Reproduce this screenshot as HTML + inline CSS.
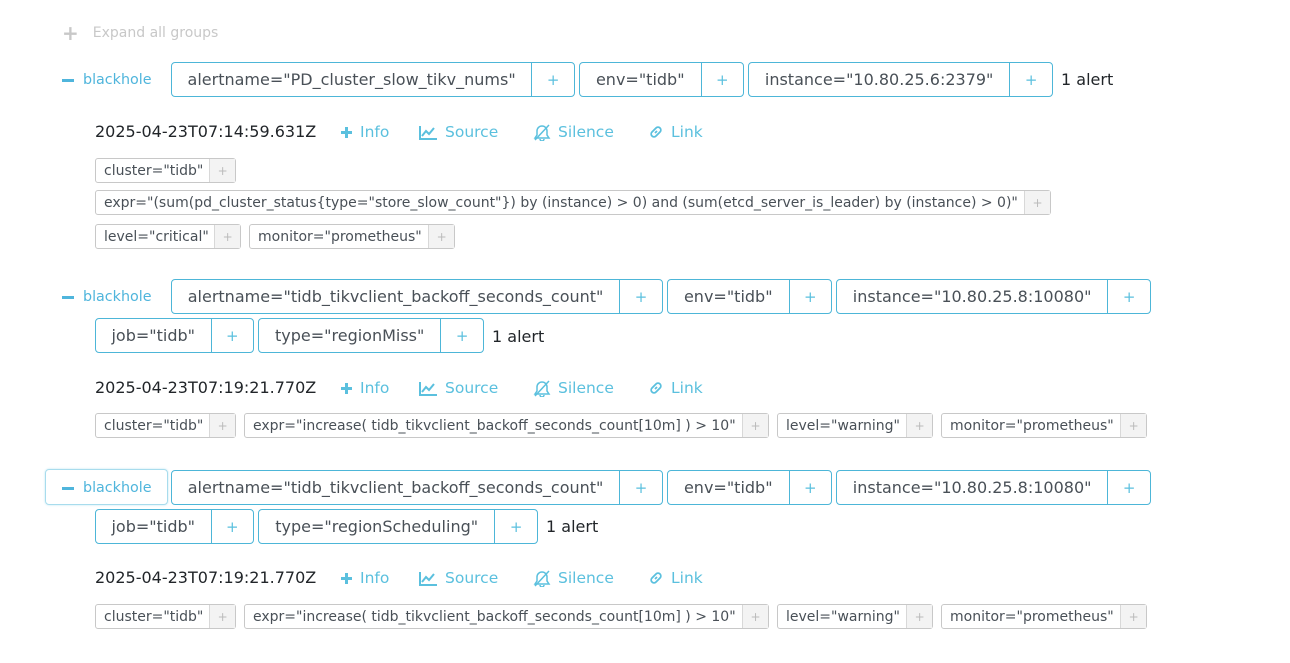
<!DOCTYPE html>
<html><head><meta charset="utf-8"><style>
*{box-sizing:border-box;margin:0;padding:0}
body{width:1290px;height:663px;background:#fff;font-family:"DejaVu Sans","Liberation Sans",sans-serif;position:relative;overflow:hidden;color:#212529}
.a{position:absolute}
.b{position:absolute;display:flex;border:1px solid #4db6d8;border-radius:4px;height:35px;font-size:16px;color:#495057}
.b span{display:flex;align-items:center;justify-content:center;height:100%}
.b .p{width:43px;border-left:1px solid #4db6d8;color:#5bc0de;font-size:15px}
.l{position:absolute;display:flex;border:1px solid #c8c8c8;border-radius:3px;height:25px;font-size:14px;color:#495057}
.l span{display:flex;align-items:center;height:100%;padding-left:8px;white-space:nowrap}
.l .p{width:26px;border-left:1px solid #d8d8d8;background:#f3f3f3;color:#bbb;font-size:12px;padding-left:0;justify-content:center}
.g{position:absolute;color:#4fb5dc;font-size:14.3px;display:flex;align-items:center}
.g i{display:inline-block;width:12px;height:3px;background:#4fb5dc;margin-right:9px}
.cnt{position:absolute;font-size:16px;color:#212529}
.ts{position:absolute;font-size:16px;color:#212529}
.lk{position:absolute;font-size:15.5px;color:#5bc0de;display:flex;align-items:center}
.lk svg{margin-right:7px}
</style></head><body>
<div class="a" style="left:62px;top:21px;font-size:14px;color:#c8c8c8;display:flex;align-items:center"><span style="font-weight:bold;font-size:20px;margin-right:14px">+</span>Expand all groups</div>

<!-- group 1 -->
<div class="g" style="left:62px;top:72px"><i></i>blackhole</div>
<div class="b" style="left:171px;top:62px;width:404px"><span style="width:361px">alertname="PD_cluster_slow_tikv_nums"</span><span class="p">+</span></div>
<div class="b" style="left:579px;top:62px;width:165px"><span style="width:122px">env="tidb"</span><span class="p">+</span></div>
<div class="b" style="left:748px;top:62px;width:305px"><span style="width:262px">instance="10.80.25.6:2379"</span><span class="p">+</span></div>
<div class="cnt" style="left:1061px;top:70px">1 alert</div>

<div class="ts" style="left:95px;top:122px">2025-04-23T07:14:59.631Z</div>
<div class="lk" style="left:340px;top:123px"><svg width="13" height="13"><path d="M6.5 1v11M1 6.5h11" stroke="#5bc0de" stroke-width="3"/></svg>Info</div>
<div class="lk" style="left:419px;top:123px"><svg width="19" height="15"><path d="M1 1v13h17M3 11l4-5 3 3 5-6" stroke="#5bc0de" stroke-width="2" fill="none"/></svg>Source</div>
<div class="lk" style="left:533px;top:123px"><svg width="18" height="17"><path d="M9 2a5 5 0 0 0-5 5v4l-2 3h14l-2-3V7a5 5 0 0 0-5-5M7 15a2 2 0 0 0 4 0M2 16L16 1" stroke="#5bc0de" stroke-width="1.5" fill="none"/></svg>Silence</div>
<div class="lk" style="left:648px;top:123px"><svg width="16" height="16"><path d="M7 9l2-2M6 6L4 8a2.5 2.5 0 0 0 4 4l2-2M10 10l2-2a2.5 2.5 0 0 0-4-4L6 6" stroke="#5bc0de" stroke-width="1.8" fill="none"/></svg>Link</div>

<div class="l" style="left:95px;top:158px;width:141px"><span style="width:115px">cluster="tidb"</span><span class="p">+</span></div>
<div class="l" style="left:95px;top:190px;width:956px"><span style="width:930px">expr="(sum(pd_cluster_status{type="store_slow_count"}) by (instance) &gt; 0) and (sum(etcd_server_is_leader) by (instance) &gt; 0)"</span><span class="p">+</span></div>
<div class="l" style="left:95px;top:224px;width:146px"><span style="width:120px">level="critical"</span><span class="p">+</span></div>
<div class="l" style="left:249px;top:224px;width:206px"><span style="width:180px">monitor="prometheus"</span><span class="p">+</span></div>

<!-- group 2 -->
<div class="g" style="left:62px;top:289px"><i></i>blackhole</div>
<div class="b" style="left:171px;top:279px;width:492px"><span style="width:449px">alertname="tidb_tikvclient_backoff_seconds_count"</span><span class="p">+</span></div>
<div class="b" style="left:667px;top:279px;width:165px"><span style="width:122px">env="tidb"</span><span class="p">+</span></div>
<div class="b" style="left:836px;top:279px;width:315px"><span style="width:272px">instance="10.80.25.8:10080"</span><span class="p">+</span></div>
<div class="b" style="left:95px;top:318px;width:159px"><span style="width:116px">job="tidb"</span><span class="p">+</span></div>
<div class="b" style="left:258px;top:318px;width:226px"><span style="width:183px">type="regionMiss"</span><span class="p">+</span></div>
<div class="cnt" style="left:492px;top:327px">1 alert</div>

<div class="ts" style="left:95px;top:378px">2025-04-23T07:19:21.770Z</div>
<div class="lk" style="left:340px;top:379px"><svg width="13" height="13"><path d="M6.5 1v11M1 6.5h11" stroke="#5bc0de" stroke-width="3"/></svg>Info</div>
<div class="lk" style="left:419px;top:379px"><svg width="19" height="15"><path d="M1 1v13h17M3 11l4-5 3 3 5-6" stroke="#5bc0de" stroke-width="2" fill="none"/></svg>Source</div>
<div class="lk" style="left:533px;top:379px"><svg width="18" height="17"><path d="M9 2a5 5 0 0 0-5 5v4l-2 3h14l-2-3V7a5 5 0 0 0-5-5M7 15a2 2 0 0 0 4 0M2 16L16 1" stroke="#5bc0de" stroke-width="1.5" fill="none"/></svg>Silence</div>
<div class="lk" style="left:648px;top:379px"><svg width="16" height="16"><path d="M7 9l2-2M6 6L4 8a2.5 2.5 0 0 0 4 4l2-2M10 10l2-2a2.5 2.5 0 0 0-4-4L6 6" stroke="#5bc0de" stroke-width="1.8" fill="none"/></svg>Link</div>

<div class="l" style="left:95px;top:413px;width:141px"><span style="width:115px">cluster="tidb"</span><span class="p">+</span></div>
<div class="l" style="left:244px;top:413px;width:525px"><span style="width:499px">expr="increase( tidb_tikvclient_backoff_seconds_count[10m] ) &gt; 10"</span><span class="p">+</span></div>
<div class="l" style="left:777px;top:413px;width:156px"><span style="width:130px">level="warning"</span><span class="p">+</span></div>
<div class="l" style="left:941px;top:413px;width:206px"><span style="width:180px">monitor="prometheus"</span><span class="p">+</span></div>

<!-- group 3 -->
<div class="a" style="left:45px;top:469px;width:123px;height:36px;border:1px solid #a8dced;border-radius:4px;box-shadow:0 0 2px #bde6f3"></div>
<div class="g" style="left:62px;top:480px"><i></i>blackhole</div>
<div class="b" style="left:171px;top:470px;width:492px"><span style="width:449px">alertname="tidb_tikvclient_backoff_seconds_count"</span><span class="p">+</span></div>
<div class="b" style="left:667px;top:470px;width:165px"><span style="width:122px">env="tidb"</span><span class="p">+</span></div>
<div class="b" style="left:836px;top:470px;width:315px"><span style="width:272px">instance="10.80.25.8:10080"</span><span class="p">+</span></div>
<div class="b" style="left:95px;top:509px;width:159px"><span style="width:116px">job="tidb"</span><span class="p">+</span></div>
<div class="b" style="left:258px;top:509px;width:280px"><span style="width:237px">type="regionScheduling"</span><span class="p">+</span></div>
<div class="cnt" style="left:546px;top:517px">1 alert</div>

<div class="ts" style="left:95px;top:568px">2025-04-23T07:19:21.770Z</div>
<div class="lk" style="left:340px;top:569px"><svg width="13" height="13"><path d="M6.5 1v11M1 6.5h11" stroke="#5bc0de" stroke-width="3"/></svg>Info</div>
<div class="lk" style="left:419px;top:569px"><svg width="19" height="15"><path d="M1 1v13h17M3 11l4-5 3 3 5-6" stroke="#5bc0de" stroke-width="2" fill="none"/></svg>Source</div>
<div class="lk" style="left:533px;top:569px"><svg width="18" height="17"><path d="M9 2a5 5 0 0 0-5 5v4l-2 3h14l-2-3V7a5 5 0 0 0-5-5M7 15a2 2 0 0 0 4 0M2 16L16 1" stroke="#5bc0de" stroke-width="1.5" fill="none"/></svg>Silence</div>
<div class="lk" style="left:648px;top:569px"><svg width="16" height="16"><path d="M7 9l2-2M6 6L4 8a2.5 2.5 0 0 0 4 4l2-2M10 10l2-2a2.5 2.5 0 0 0-4-4L6 6" stroke="#5bc0de" stroke-width="1.8" fill="none"/></svg>Link</div>

<div class="l" style="left:95px;top:604px;width:141px"><span style="width:115px">cluster="tidb"</span><span class="p">+</span></div>
<div class="l" style="left:244px;top:604px;width:525px"><span style="width:499px">expr="increase( tidb_tikvclient_backoff_seconds_count[10m] ) &gt; 10"</span><span class="p">+</span></div>
<div class="l" style="left:777px;top:604px;width:156px"><span style="width:130px">level="warning"</span><span class="p">+</span></div>
<div class="l" style="left:941px;top:604px;width:206px"><span style="width:180px">monitor="prometheus"</span><span class="p">+</span></div>
</body></html>
